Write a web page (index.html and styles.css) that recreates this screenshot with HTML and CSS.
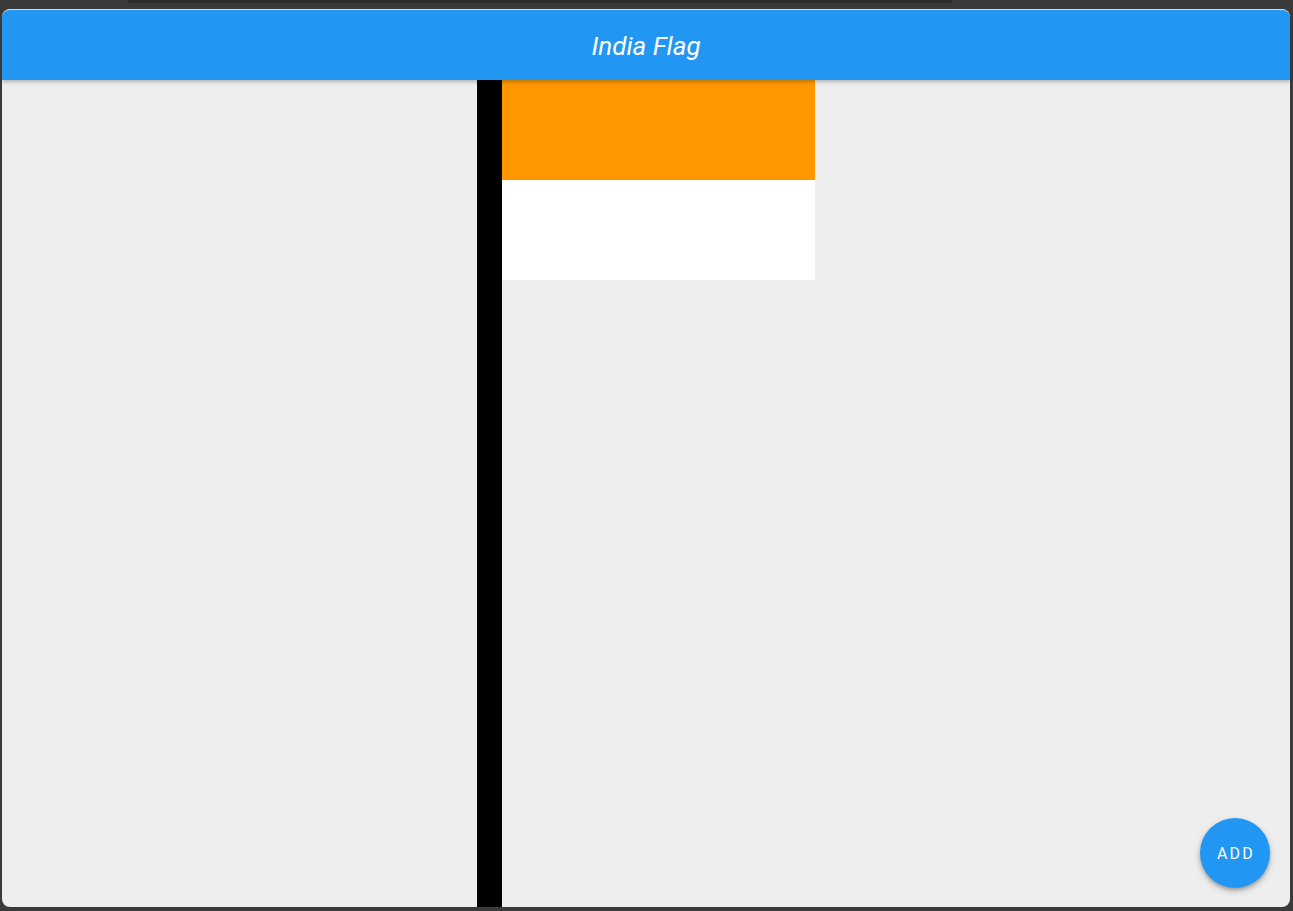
FILE: index.html
```html
<!DOCTYPE html>
<html>
<head>
<meta charset="utf-8">
<title>India Flag</title>
<link rel="stylesheet" href="styles.css">
</head>
<body>
<div class="desk">
  <div class="notch"></div>
  <div class="window">
    <header class="appbar"><h1 class="title">India Flag</h1></header>
    <main class="content">
      <div class="flagwrap">
        <div class="pole"></div>
        <div class="flag">
          <div class="band saffron"></div>
          <div class="band white"></div>
        </div>
      </div>
      <button class="fab">ADD</button>
    </main>
  </div>
</div>
</body>
</html>
```
FILE: styles.css
```css
html, body {
  margin: 0;
  padding: 0;
  height: 100%;
  background: #3a3a3a;
  font-family: Roboto, "Noto Sans", sans-serif;
}
.desk {
  position: relative;
  height: 911px;
  padding: 9px 3px 4px 2px;
  box-sizing: border-box;
  display: flex;
}
.notch {
  position: absolute;
  left: 128px;
  top: 0;
  width: 824px;
  height: 3px;
  background: #2a2a2a;
  border-radius: 0 0 6px 6px;
}
.window {
  flex: 1;
  display: flex;
  flex-direction: column;
  border-radius: 8px;
  overflow: hidden;
  background: #eeeeee;
  border-top: 1px solid #dcdcdc;
}
.appbar {
  height: 70px;
  background: #2196f3;
  display: flex;
  align-items: center;
  justify-content: center;
  box-shadow: 0 2px 4px rgba(0,0,0,0.25);
  position: relative;
  z-index: 2;
  flex: none;
}
.title {
  margin: 0;
  color: #fff;
  font-size: 26px;
  font-style: italic;
  font-weight: 400;
  position: relative;
  top: 1px;
}
.content {
  flex: 1;
  position: relative;
  display: flex;
  justify-content: center;
}
.flagwrap {
  display: flex;
}
.pole {
  width: 25px;
  background: #000;
}
.flag {
  width: 313px;
  display: flex;
  flex-direction: column;
}
.band {
  height: 100px;
}
.saffron { background: #ff9800; }
.white { background: #ffffff; }
.fab {
  position: absolute;
  right: 20px;
  bottom: 19px;
  width: 70px;
  height: 70px;
  border-radius: 50%;
  border: none;
  background: #2196f3;
  color: #fff;
  font-family: Roboto, "Noto Sans", sans-serif;
  font-size: 16px;
  font-weight: 400;
  letter-spacing: 2.2px;
  padding: 0 0 0 2px;
  box-shadow: 0 3px 6px rgba(0,0,0,0.25), 0 2px 3px rgba(0,0,0,0.15);
}
```
